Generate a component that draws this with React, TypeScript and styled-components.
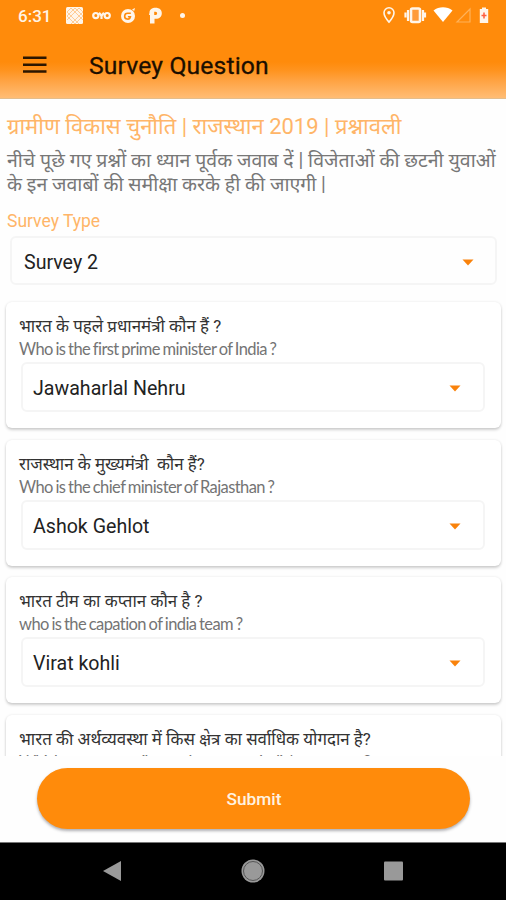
import React from "react";
import styled, { createGlobalStyle } from "styled-components";

const GlobalStyle = createGlobalStyle`
  *, *::before, *::after { box-sizing: border-box; }
  html, body { margin: 0; padding: 0; background: #fff; }
  body { font-family: Roboto, "Noto Sans", "Noto Sans Devanagari", sans-serif; }
`;

const Screen = styled.div`
  display: flex;
  flex-direction: column;
  width: 506px;
  height: 900px;
  overflow: hidden;
  background: #fefefe;
`;

const Header = styled.header`
  flex: none;
  height: 99px;
  background: linear-gradient(#ff8b0b 0, #ff8b0b 62px, #ff9420 71px, #ffa343 81px, #ffbd75 98px);
  border-bottom: 1px solid #e3bd8c;
`;

const StatusBar = styled.div`
  display: flex;
  justify-content: space-between;
  height: 32px;
  svg { display: block; }
`;

const Clock = styled.span`
  width: 47px;
  padding: 6px 0 0 18px;
  font-size: 17px;
  line-height: 20px;
  font-weight: 500;
  color: #fff5e6;
  white-space: nowrap;
`;

const StatusGroup = styled.div`
  display: flex;
`;

const Toolbar = styled.div`
  display: flex;
  align-items: center;
  height: 66px;
  padding-left: 22px;
`;

const MenuButton = styled.button`
  display: block;
  width: 26px;
  height: 20px;
  margin: 0 41px 0 0;
  padding: 0;
  border: 0;
  background: none;
  svg { display: block; }
`;

const Title = styled.h1`
  margin: 1px 0 0;
  font-size: 24.7px;
  line-height: 32px;
  font-weight: 400;
  letter-spacing: 0.15px;
  color: #1b0e00;
  -webkit-text-stroke: 0.3px #1b0e00;
`;

const Content = styled.main`
  flex: none;
  height: 657px;
  overflow: hidden;
  padding: 0 5px 0 6px;
`;

const Heading = styled.h2`
  margin: 12px 0 0 1px;
  font-size: 22px;
  line-height: 32px;
  height: 32px;
  font-weight: 400;
  color: #ffb568;
  white-space: nowrap;
`;

const Instructions = styled.p`
  margin: 6px 0 0 1px;
  font-size: 19.5px;
  line-height: 24px;
  height: 48px;
  color: #777;
  white-space: nowrap;
`;

const InstructionLine = styled.span`
  display: block;
`;

const FieldLabel = styled.div`
  margin: 12px 0 0 1px;
  font-size: 17.5px;
  line-height: 25px;
  height: 24px;
  color: #ffb568;
`;

const SelectBox = styled.div<{ $top?: boolean }>`
  display: flex;
  align-items: center;
  justify-content: space-between;
  height: ${(p) => (p.$top ? 49 : 50)}px;
  margin: ${(p) => (p.$top ? "3px 4px 17.4px" : "1px 0 0 2px")};
  padding: 3px ${(p) => (p.$top ? 21 : 22)}px 0 ${(p) => (p.$top ? 12 : 10)}px;
  border: 2px solid #f5f5f5;
  border-radius: 6px;
  font-size: 19.6px;
  color: #222;
`;

const Card = styled.section`
  height: 126px;
  margin-bottom: 11.4px;
  padding: 12px 16px 0 13px;
  background: #fff;
  border-radius: 6px;
  box-shadow: 0 2px 3px rgba(0, 0, 0, 0.18), 0 0 3px rgba(0, 0, 0, 0.08);
`;

const QuestionHindi = styled.div`
  height: 23px;
  font-size: 16.9px;
  line-height: 25px;
  color: #333;
  white-space: pre;
`;

const QuestionEnglish = styled.div<{ $spacing?: number }>`
  height: 24px;
  font-family: Lato, sans-serif;
  font-size: 16.5px;
  line-height: 25px;
  letter-spacing: ${(p) => p.$spacing ?? -0.58}px;
  word-spacing: -1px;
  font-variant-ligatures: none;
  color: #747474;
  white-space: nowrap;
`;

const Footer = styled.footer`
  flex: none;
  height: 86px;
  padding: 12px 36px 0 37px;
  background: #fefefe;
`;

const SubmitButton = styled.button`
  display: block;
  width: 100%;
  height: 61px;
  padding: 1px 0 0 1px;
  border: 0;
  border-radius: 31px;
  background: #ff8b0b;
  box-shadow: 0 2px 3px rgba(60, 60, 70, 0.4);
  font-family: Roboto, sans-serif;
  font-size: 17.3px;
  font-weight: 500;
  color: #fff3e2;
`;

const NavBar = styled.nav`
  flex: none;
  display: flex;
  justify-content: space-between;
  align-items: center;
  height: 58px;
  padding: 0 102px 1px;
  background: #000;
  border-top: 1px solid #777;
`;

const Caret = () => (
  <svg width="12" height="7" viewBox="0 0 12 7">
    <path d="M.5.5h11L6 6.5z" fill="#f9820b" />
  </svg>
);

const questions = [
  { hindi: "भारत के पहले प्रधानमंत्री कौन हैं ?", english: "Who is the first prime minister of India ?", answer: "Jawaharlal Nehru" },
  { hindi: "राजस्थान के मुख्यमंत्री  कौन हैं?", english: "Who is the chief minister of Rajasthan ?", answer: "Ashok Gehlot" },
  { hindi: "भारत टीम का कप्तान कौन है ?", english: "who is the capation of india team ?", answer: "Virat kohli" },
  { hindi: "भारत की अर्थव्यवस्था में किस क्षेत्र का सर्वाधिक योगदान है?", english: "Which sector contributes the most to India's economy ?", answer: "", spacing: -0.78 },
];

export default function App() {
  return (
    <>
      <GlobalStyle />
      <Screen>
        <Header>
          <StatusBar>
            <StatusGroup>
              <Clock>6:31</Clock>
              <svg width="150" height="32" viewBox="47 0 150 32" fill="#fff5ea">
                <rect x="66" y="7" width="17" height="17" rx="1.5" />
                <g stroke="#ffc78c" strokeWidth="0.9" fill="none">
                  <path d="M67 12l4-4 12 12M67 20l12-12 4 4M67 12l12 12M71 24l12-12M67 16l8-8 8 8-8 8z" />
                </g>
                <g fill="none" stroke="#fff5ea" strokeWidth="2.2">
                  <circle cx="95.8" cy="15.6" r="2.6" />
                  <circle cx="107.2" cy="15.6" r="2.6" />
                  <path d="M99 12.8l2.5 3 2.5-3M101.5 15.5v3.5" />
                </g>
                <circle cx="128" cy="16" r="7" />
                <path d="M130.8 13.3h-3.2a2.9 2.9 0 1 0 2.8 3.5h-2.5" fill="none" stroke="#ff8b0b" strokeWidth="1.6" />
                <path d="M132 9.5l3-1.5-.8 3z" />
                <path
                  fillRule="evenodd"
                  d="M149.500 12.500c0-3 2.500-4.700 6-4.700 4 0 6.300 2.200 6.300 5.400 0 3.300-2.300 5.600-6 5.600h-1.300V23.500h-4.500v-8.500h-1zM154.200 11.800v3.300h1.300c2.200 0 2.200-3.300 0-3.300z"
                />
                <circle cx="182.500" cy="15.500" r="2.500" />
              </svg>
            </StatusGroup>
            <svg width="126" height="32" viewBox="380 0 126 32" fill="#fff5ea">
              <path d="M389 7.800a5 5 0 0 0-5 5c0 3.700 5 9.300 5 9.300s5-5.600 5-9.300a5 5 0 0 0-5-5z" fill="none" stroke="#fff5ea" strokeWidth="1.600" />
              <circle cx="389" cy="12.800" r="1.800" />
              <rect x="411" y="8.500" width="9" height="13.500" rx="1.500" fill="#ff9b3b" stroke="#fff5ea" strokeWidth="2.600" />
              <path d="M408 10v11M423 10v11M405.500 12.500v5M425 12.500v5" stroke="#fff5ea" strokeWidth="2.200" />
              <path d="M433.500 10.500c5.500-4.300 13.500-4.300 19 0L443 22z" fill="#fff" />
              <path d="M457 22l13-13v13z" fill="none" stroke="#ffb259" strokeWidth="1.200" />
              <path d="M482 7.500h4V9h2.200v14h-8.400V9h2.200z" />
              <path d="M484 12.500v6M481.500 15.500h5" stroke="#ff5d3d" strokeWidth="1.500" />
            </svg>
          </StatusBar>
          <Toolbar>
            <MenuButton aria-label="Menu">
              <svg width="26" height="20" viewBox="0 0 26 20">
                <path d="M1 2.700h23.500M1 9.700h23.500M1 16.500h23.500" stroke="#2b1600" strokeWidth="2.600" />
              </svg>
            </MenuButton>
            <Title>Survey Question</Title>
          </Toolbar>
        </Header>
        <Content>
          <Heading>ग्रामीण विकास चुनौति | राजस्थान 2019 | प्रश्नावली</Heading>
          <Instructions>
            <InstructionLine>नीचे पूछे गए प्रश्नों का ध्यान पूर्वक जवाब दें | विजेताओं की छटनी युवाओं</InstructionLine>
            <InstructionLine>के इन जवाबों की समीक्षा करके ही की जाएगी |</InstructionLine>
          </Instructions>
          <FieldLabel>Survey Type</FieldLabel>
          <SelectBox $top>
            <span>Survey 2</span>
            <Caret />
          </SelectBox>
          {questions.map((q) => (
            <Card key={q.hindi}>
              <QuestionHindi>{q.hindi}</QuestionHindi>
              <QuestionEnglish $spacing={q.spacing}>{q.english}</QuestionEnglish>
              <SelectBox>
                <span>{q.answer}</span>
                <Caret />
              </SelectBox>
            </Card>
          ))}
        </Content>
        <Footer>
          <SubmitButton>Submit</SubmitButton>
        </Footer>
        <NavBar>
          <svg width="20" height="22" viewBox="0 0 20 22"><path d="M1 11L19 1v20z" fill="#999" /></svg>
          <svg width="26" height="26" viewBox="0 0 26 26">
            <circle cx="13" cy="13" r="11.500" fill="#999" />
            <circle cx="13" cy="13" r="9.500" fill="none" stroke="#555" strokeWidth="1" />
          </svg>
          <svg width="21" height="20" viewBox="0 0 21 20"><rect x="1" y=".5" width="19" height="19" rx="1" fill="#999" /></svg>
        </NavBar>
      </Screen>
    </>
  );
}
